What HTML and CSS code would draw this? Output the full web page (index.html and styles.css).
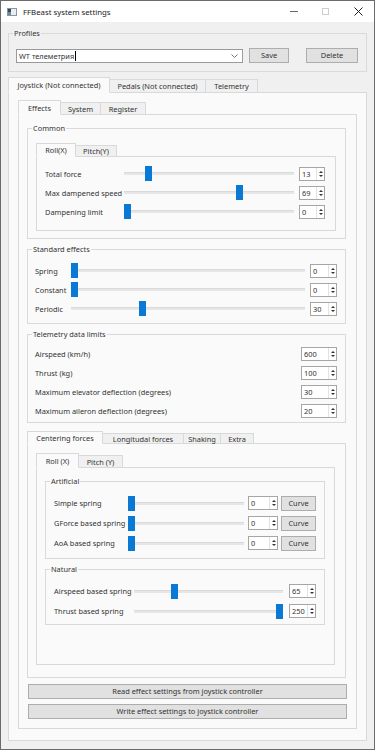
FILE: index.html
```html
<!DOCTYPE html>
<html lang="en">
<head>
    <meta charset="UTF-8">
    <meta name="viewport" content="width=device-width, initial-scale=1.0">
    <title>FFBeast system settings</title>
    <link rel="stylesheet" href="styles.css">
</head>
<body>
<div class="window">
    <div class="titlebar">
        <svg class="app-icon" width="10" height="8" viewBox="0 0 10 8">
            <rect x="0.5" y="0.5" width="9" height="7" fill="#e8eef2" stroke="#8a959c"/>
            <rect x="1" y="1" width="3" height="3" fill="#2f4a5c"/>
            <rect x="1" y="4" width="3" height="3" fill="#6f8796"/>
        </svg>
        <span class="title">FFBeast system settings</span>
        <div class="win-controls">
            <span class="wc wc-min"></span>
            <span class="wc wc-max"></span>
            <svg class="wc wc-close" width="9" height="9" viewBox="0 0 9 9">
                <path d="M0.5 0.5 L8.5 8.5 M8.5 0.5 L0.5 8.5" stroke="#222" stroke-width="1"/>
            </svg>
        </div>
    </div>

    <div class="body">
        <fieldset class="group">
            <legend>Profiles</legend>
            <div class="group-body profiles">
                <div class="combo">
                    <span class="combo-text">WT телеметрия<span class="caret"></span></span>
                    <svg class="chevron" width="7" height="4" viewBox="0 0 7 4">
                        <path d="M0.5 0.5 L3.5 3.5 L6.5 0.5" fill="none" stroke="#666" stroke-width="0.9"/>
                    </svg>
                </div>
                <button class="btn btn-save">Save</button>
                <button class="btn btn-delete">Delete</button>
            </div>
        </fieldset>

        <div class="tabwidget main-tabs">
            <div class="tabbar">
                <span class="tab active">Joystick (Not connected)</span>
                <span class="tab">Pedals (Not connected)</span>
                <span class="tab">Telemetry</span>
            </div>
            <div class="tabpane main-pane">
                <div class="tabwidget sub-tabs">
                    <div class="tabbar">
                        <span class="tab active">Effects</span>
                        <span class="tab">System</span>
                        <span class="tab">Register</span>
                    </div>
                    <div class="tabpane effects-pane">

                        <fieldset class="group">
                            <legend>Common</legend>
                            <div class="group-body common">
                                <div class="tabwidget axis-tabs">
                                    <div class="tabbar">
                                        <span class="tab active">Roll(X)</span>
                                        <span class="tab">Pitch(Y)</span>
                                    </div>
                                    <div class="tabpane common-pane">
                                        <div class="row row-common">
                                            <span class="label">Total force</span>
                                            <div class="slider"><div class="track"></div><div class="handle" style="--v:0.13"></div></div>
                                            <div class="spin"><span class="spin-val">13</span><span class="spin-arrows"><i class="up"></i><i class="down"></i></span></div>
                                        </div>
                                        <div class="row row-common">
                                            <span class="label">Max dampened speed</span>
                                            <div class="slider"><div class="track"></div><div class="handle" style="--v:0.69"></div></div>
                                            <div class="spin"><span class="spin-val">69</span><span class="spin-arrows"><i class="up"></i><i class="down"></i></span></div>
                                        </div>
                                        <div class="row row-common">
                                            <span class="label">Dampening limit</span>
                                            <div class="slider"><div class="track"></div><div class="handle" style="--v:0"></div></div>
                                            <div class="spin"><span class="spin-val">0</span><span class="spin-arrows"><i class="up"></i><i class="down"></i></span></div>
                                        </div>
                                    </div>
                                </div>
                            </div>
                        </fieldset>

                        <fieldset class="group">
                            <legend>Standard effects</legend>
                            <div class="group-body standard">
                                <div class="row row-standard">
                                    <span class="label">Spring</span>
                                    <div class="slider"><div class="track"></div><div class="handle" style="--v:0"></div></div>
                                    <div class="spin"><span class="spin-val">0</span><span class="spin-arrows"><i class="up"></i><i class="down"></i></span></div>
                                </div>
                                <div class="row row-standard">
                                    <span class="label">Constant</span>
                                    <div class="slider"><div class="track"></div><div class="handle" style="--v:0"></div></div>
                                    <div class="spin"><span class="spin-val">0</span><span class="spin-arrows"><i class="up"></i><i class="down"></i></span></div>
                                </div>
                                <div class="row row-standard">
                                    <span class="label">Periodic</span>
                                    <div class="slider"><div class="track"></div><div class="handle" style="--v:0.3"></div></div>
                                    <div class="spin"><span class="spin-val">30</span><span class="spin-arrows"><i class="up"></i><i class="down"></i></span></div>
                                </div>
                            </div>
                        </fieldset>

                        <fieldset class="group">
                            <legend>Telemetry data limits</legend>
                            <div class="group-body telemetry">
                                <div class="row row-limit">
                                    <span class="label">Airspeed (km/h)</span>
                                    <div class="spin"><span class="spin-val">600</span><span class="spin-arrows"><i class="up"></i><i class="down"></i></span></div>
                                </div>
                                <div class="row row-limit">
                                    <span class="label">Thrust (kg)</span>
                                    <div class="spin"><span class="spin-val">100</span><span class="spin-arrows"><i class="up"></i><i class="down"></i></span></div>
                                </div>
                                <div class="row row-limit">
                                    <span class="label">Maximum elevator deflection (degrees)</span>
                                    <div class="spin"><span class="spin-val">30</span><span class="spin-arrows"><i class="up"></i><i class="down"></i></span></div>
                                </div>
                                <div class="row row-limit">
                                    <span class="label">Maximum aileron deflection (degrees)</span>
                                    <div class="spin"><span class="spin-val">20</span><span class="spin-arrows"><i class="up"></i><i class="down"></i></span></div>
                                </div>
                            </div>
                        </fieldset>

                        <div class="tabwidget force-tabs">
                            <div class="tabbar">
                                <span class="tab active">Centering forces</span>
                                <span class="tab">Longitudal forces</span>
                                <span class="tab">Shaking</span>
                                <span class="tab">Extra</span>
                            </div>
                            <div class="tabpane force-pane">
                                <div class="tabwidget axis2-tabs">
                                    <div class="tabbar">
                                        <span class="tab active">Roll (X)</span>
                                        <span class="tab">Pitch (Y)</span>
                                    </div>
                                    <div class="tabpane axis2-pane">
                                        <fieldset class="group">
                                            <legend>Artificial</legend>
                                            <div class="group-body artificial">
                                                <div class="row row-artificial">
                                                    <span class="label">Simple spring</span>
                                                    <div class="slider"><div class="track"></div><div class="handle" style="--v:0"></div></div>
                                                    <div class="spin"><span class="spin-val">0</span><span class="spin-arrows"><i class="up"></i><i class="down"></i></span></div>
                                                    <button class="btn btn-curve">Curve</button>
                                                </div>
                                                <div class="row row-artificial">
                                                    <span class="label">GForce based spring</span>
                                                    <div class="slider"><div class="track"></div><div class="handle" style="--v:0"></div></div>
                                                    <div class="spin"><span class="spin-val">0</span><span class="spin-arrows"><i class="up"></i><i class="down"></i></span></div>
                                                    <button class="btn btn-curve">Curve</button>
                                                </div>
                                                <div class="row row-artificial">
                                                    <span class="label">AoA based spring</span>
                                                    <div class="slider"><div class="track"></div><div class="handle" style="--v:0"></div></div>
                                                    <div class="spin"><span class="spin-val">0</span><span class="spin-arrows"><i class="up"></i><i class="down"></i></span></div>
                                                    <button class="btn btn-curve">Curve</button>
                                                </div>
                                            </div>
                                        </fieldset>
                                        <fieldset class="group">
                                            <legend>Natural</legend>
                                            <div class="group-body natural">
                                                <div class="row row-natural">
                                                    <span class="label">Airspeed based spring</span>
                                                    <div class="slider"><div class="track"></div><div class="handle" style="--v:0.26"></div></div>
                                                    <div class="spin"><span class="spin-val">65</span><span class="spin-arrows"><i class="up"></i><i class="down"></i></span></div>
                                                </div>
                                                <div class="row row-natural">
                                                    <span class="label">Thrust based spring</span>
                                                    <div class="slider"><div class="track"></div><div class="handle" style="--v:1"></div></div>
                                                    <div class="spin"><span class="spin-val">250</span><span class="spin-arrows"><i class="up"></i><i class="down"></i></span></div>
                                                </div>
                                            </div>
                                        </fieldset>
                                    </div>
                                </div>
                            </div>
                        </div>

                        <div class="actions">
                            <button class="btn btn-wide">Read effect settings from joystick controller</button>
                            <button class="btn btn-wide">Write effect settings to joystick controller</button>
                        </div>
                    </div>
                </div>
            </div>
        </div>
    </div>
</div>
</body>
</html>
```
FILE: styles.css
```css
* {
    box-sizing: border-box;
}
body {
    margin: 0;
    background: #ffffff;
    font-family: 'Noto Sans', sans-serif;
    font-size: 7.4px;
    color: #333333;
}
.window {
    width: 375px;
    height: 750px;
    border: 1px solid #6b6b6b;
    background: #f0f0f0;
    display: flex;
    flex-direction: column;
}
.titlebar {
    height: 21px;
    flex: none;
    background: #ffffff;
    display: flex;
    align-items: center;
    padding-left: 6px;
}
.app-icon {
    margin-right: 6px;
}
.title {
    font-size: 7.8px;
    color: #222;
}
.win-controls {
    margin-left: auto;
    display: flex;
    align-items: center;
}
.wc {
    display: block;
}
.wc-min {
    width: 8px;
    height: 1px;
    background: #666;
    margin-right: 24px;
}
.wc-max {
    width: 7px;
    height: 7px;
    border: 1px solid #cfcfcf;
    margin-right: 25px;
}
.wc-close {
    margin-right: 11px;
}

.body {
    flex: 1;
    display: flex;
    flex-direction: column;
    padding: 0 7px 8px 7px;
    min-height: 0;
}

/* group boxes */
.group {
    margin: 0;
    padding: 0;
    border: 1px solid #dadada;
    min-width: 0;
}
.group legend {
    line-height: 10px;
    padding: 0 1px;
    margin-left: 4px;
}
.body > .group {
    margin-top: 6px;
}
.group-body {
    display: flex;
    flex-direction: column;
}

/* profiles */
.profiles {
    flex-direction: row;
    align-items: center;
    padding: 10px 8px 8px 7px;
}
.combo {
    flex: 1;
    height: 14px;
    background: #fff;
    border: 1px solid #9a9a9a;
    display: flex;
    align-items: center;
    padding: 0 4px 0 2px;
}
.combo-text {
    flex: 1;
    display: flex;
    align-items: center;
}
.caret {
    width: 1px;
    height: 10px;
    background: #000;
    margin-left: 1px;
}
.btn {
    font: inherit;
    color: inherit;
    background: #e1e1e1;
    border: 1px solid #adadad;
    padding: 0;
    height: 15px;
    line-height: 13px;
}
.btn-save {
    width: 40px;
    margin-left: 6px;
}
.btn-delete {
    width: 52px;
    margin-left: 17px;
}

/* tabs */
.tabwidget {
    display: flex;
    flex-direction: column;
}
.tabbar {
    display: flex;
    align-items: flex-end;
    position: relative;
    z-index: 1;
    margin-bottom: -1px;
}
.tab {
    display: flex;
    align-items: center;
    justify-content: center;
    background: #f0f0f0;
    border: 1px solid #d9d9d9;
    white-space: nowrap;
}
.tab + .tab {
    margin-left: -1px;
}
.tab.active {
    background: #fafafa;
    border-bottom-color: #fafafa;
    position: relative;
    z-index: 1;
}
.tabpane {
    background: #fafafa;
    border: 1px solid #d9d9d9;
    display: flex;
    flex-direction: column;
}

.main-tabs {
    flex: 1;
    margin-top: 5px;
}
.main-tabs > .tabbar .tab {
    height: 14px;
}
.main-tabs > .tabbar .tab.active {
    height: 16px;
}
.main-tabs > .tabbar .tab:nth-child(1) { width: 102px; }
.main-tabs > .tabbar .tab:nth-child(2) { width: 97px; }
.main-tabs > .tabbar .tab:nth-child(3) { width: 53px; }
.main-pane {
    flex: 1;
    padding: 7px 9px 11px 9px;
}

.sub-tabs {
    flex: 1;
}
.sub-tabs > .tabbar .tab {
    height: 13px;
}
.sub-tabs > .tabbar .tab.active {
    height: 15px;
}
.sub-tabs > .tabbar .tab:nth-child(1) { width: 43px; }
.sub-tabs > .tabbar .tab:nth-child(2) { width: 41px; }
.sub-tabs > .tabbar .tab:nth-child(3) { width: 46px; }
.effects-pane {
    flex: 1;
    padding: 8px 10px 9px 8px;
}
.effects-pane > .group + .group {
    margin-top: 5px;
}

/* common */
.common {
    padding: 10px 9px 7px 8px;
}
.axis-tabs > .tabbar .tab {
    height: 12px;
}
.axis-tabs > .tabbar .tab.active {
    height: 14px;
}
.axis-tabs > .tabbar .tab:nth-child(1) { width: 40px; }
.axis-tabs > .tabbar .tab:nth-child(2) { width: 42px; }
.common-pane {
    padding: 7px 10px 9px 8px;
}

/* rows */
.row {
    display: grid;
    align-items: center;
    height: 19px;
}
.row .label {
    white-space: nowrap;
}
.row-common {
    grid-template-columns: 74px 1fr 26px;
    column-gap: 5px;
}
.standard {
    padding: 7px 8px 5px 7px;
}
.row-standard {
    grid-template-columns: 31px 1fr 27px;
    column-gap: 5px;
}
.telemetry {
    padding: 5px 8px 2px 7px;
}
.row-limit {
    grid-template-columns: 1fr 36px;
}

/* slider */
.slider {
    position: relative;
    height: 15px;
    display: flex;
    align-items: center;
}
.track {
    width: 100%;
    height: 3px;
    background: #e6e6e6;
    border-top: 1px solid #dadada;
}
.handle {
    position: absolute;
    top: 0;
    left: calc((100% - 7px) * var(--v));
    width: 7px;
    height: 15px;
    background: #0a78d5;
}

/* spin box */
.spin {
    height: 14px;
    background: #fff;
    border: 1px solid #a6a6a6;
    display: flex;
}
.spin-val {
    flex: 1;
    padding-left: 2px;
    line-height: 12px;
}
.spin-arrows {
    width: 8px;
    border-left: 1px solid #e2e2e2;
    display: flex;
    flex-direction: column;
    align-items: center;
    justify-content: center;
    gap: 2px;
}
.spin-arrows i {
    display: block;
    width: 0;
    height: 0;
    border-left: 2px solid transparent;
    border-right: 2px solid transparent;
}
.spin-arrows .up {
    border-bottom: 2px solid #333;
}
.spin-arrows .down {
    border-top: 2px solid #333;
}

/* centering forces */
.force-tabs {
    flex: 1;
    margin-top: 8px;
}
.force-tabs > .tabbar .tab {
    height: 11px;
}
.force-tabs > .tabbar .tab.active {
    height: 13px;
}
.force-tabs > .tabbar .tab:nth-child(1) { width: 76px; }
.force-tabs > .tabbar .tab:nth-child(2) { width: 82px; }
.force-tabs > .tabbar .tab:nth-child(3) { width: 38px; }
.force-tabs > .tabbar .tab:nth-child(4) { width: 34px; }
.force-pane {
    flex: 1;
    padding: 9px 10px 12px 8px;
}
.axis2-tabs {
    flex: 1;
}
.axis2-tabs > .tabbar .tab {
    height: 13px;
}
.axis2-tabs > .tabbar .tab.active {
    height: 15px;
}
.axis2-tabs > .tabbar .tab:nth-child(1) { width: 43px; }
.axis2-tabs > .tabbar .tab:nth-child(2) { width: 45px; }
.axis2-pane {
    flex: 1;
    padding: 8px 9px 0 8px;
}
.axis2-pane > .group + .group {
    margin-top: 5px;
}
.artificial {
    padding: 7px 8px 5px 8px;
}
.row-artificial {
    height: 20px;
    grid-template-columns: 70px 1fr 30px 34px;
    column-gap: 4px;
}
.row-artificial .btn-curve {
    margin-left: -1px;
}
.natural {
    padding: 7px 8px 3px 8px;
}
.row-natural {
    height: 20px;
    grid-template-columns: 74px 1fr 27px;
    column-gap: 6px;
}

/* bottom buttons */
.actions {
    display: flex;
    flex-direction: column;
    gap: 5px;
    margin-top: 6px;
}
.btn-wide {
    width: 100%;
    margin-left: 1px;
}
```
